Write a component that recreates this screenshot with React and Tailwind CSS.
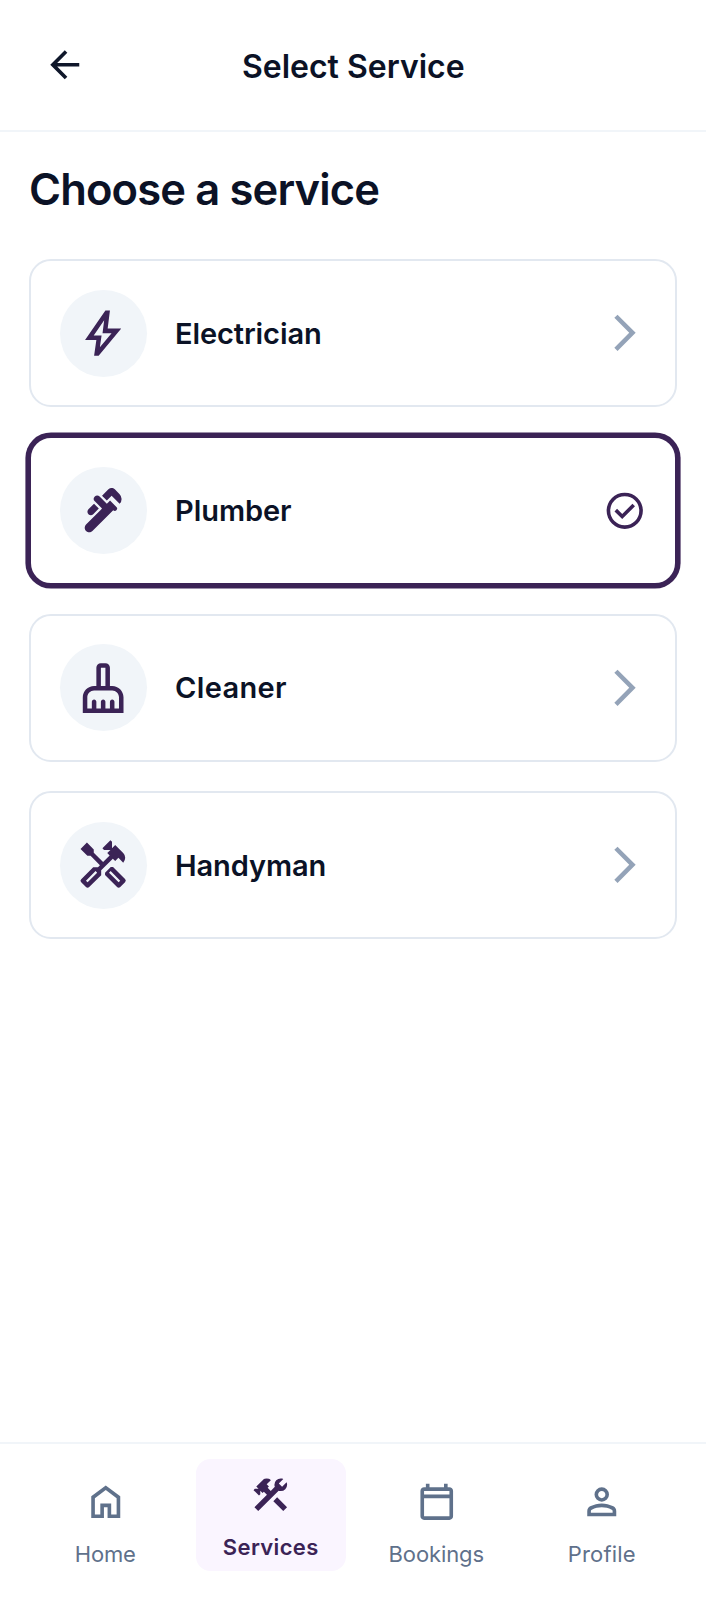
import { MdPlumbing, MdOutlineCleaningServices, MdOutlineHandyman } from "react-icons/md";

const PATHS = {
  back: "m313-440 224 224-57 56-320-320 320-320 57 56-224 224h487v80H313Z",
  bolt: "m422-232 207-248H469l29-227-185 267h139l-30 208ZM320-80l40-280H160l360-520h80l-40 320h240L400-80h-80Z",
  chevron: "m321-80-71-71 329-329-329-329 71-71 400 400L321-80Z",
  check:
    "m424-296 282-282-56-56-226 226-114-114-56 56 170 170Zm56 216q-83 0-156-31.5T197-197q-54-54-85.5-127T80-480q0-83 31.5-156T197-763q54-54 127-85.5T480-880q83 0 156 31.5T763-763q54 54 85.5 127T880-480q0 83-31.5 156T763-197q-54 54-127 85.5T480-80Zm0-80q134 0 227-93t93-227q0-134-93-227t-227-93q-134 0-227 93t-93 227q0 134 93 227t227 93Z",
  tools:
    "M756-120 537-339l84-84 219 219-84 84Zm-552 0-84-84 276-276-68-68-28 28-51-51v82l-28 28-121-121 28-28h82l-50-50 142-142q20-20 43-29t47-9q24 0 47 9t43 29l-92 92 50 50-28 28 68 68 90-90q-4-11-6.5-23t-2.5-24q0-59 40.5-99.5T701-841q15 0 28.5 3t27.5 9l-99 99 72 72 99-99q7 14 9.5 27.5T841-701q0 59-40.5 99.5T701-561q-12 0-24-2t-23-7L204-120Z",
  home: "M240-200h120v-240h240v240h120v-360L480-740 240-560v360Zm-80 80v-480l320-240 320 240v480H520v-240h-80v240H160Z",
  calendar:
    "M200-80q-33 0-56.5-23.5T120-160v-560q0-33 23.5-56.5T200-800h40v-80h80v80h320v-80h80v80h40q33 0 56.5 23.5T840-720v560q0 33-23.5 56.5T760-80H200Zm0-80h560v-400H200v400Zm0-480h560v-80H200v80Z",
  person:
    "M480-480q-66 0-113-47t-47-113q0-66 47-113t113-47q66 0 113 47t47 113q0 66-47 113t-113 47ZM160-160v-112q0-34 17.5-62.5T224-378q62-31 126-46.5T480-440q66 0 130 15.5T736-378q29 15 46.5 43.5T800-272v112H160Zm80-80h480v-32q0-11-5.5-20T700-306q-54-27-109-40.5T480-360q-56 0-111 13.5T260-306q-9 5-14.5 14t-5.5 20v32Zm240-320q33 0 56.5-23.5T560-640q0-33-23.5-56.5T480-720q-33 0-56.5 23.5T400-640q0 33 23.5 56.5T480-560Z",
};

function Symbol({ name, className }) {
  return (
    <svg viewBox="0 -960 960 960" fill="currentColor" className={className} aria-hidden="true">
      <path d={PATHS[name]} />
    </svg>
  );
}

const services = [
  { label: "Electrician", icon: <Symbol name="bolt" className="size-[54.3px]" />, tracking: "tracking-[-0.1px]" },
  { label: "Plumber", icon: <MdPlumbing className="size-[54.3px]" />, tracking: "tracking-[-0.05px]", selected: true },
  { label: "Cleaner", icon: <MdOutlineCleaningServices className="size-[54.3px]" />, tracking: "tracking-[0.35px]" },
  { label: "Handyman", icon: <MdOutlineHandyman className="size-[54.3px]" />, tracking: "tracking-[-0.1px]" },
];

const tabs = [
  { label: "Home", icon: <Symbol name="home" className="size-[43.5px]" />, tracking: "tracking-[-0.2px]" },
  {
    label: "Services",
    icon: <Symbol name="tools" className="size-[43.5px]" />,
    tracking: "tracking-[0.35px]",
    active: true,
  },
  { label: "Bookings", icon: <Symbol name="calendar" className="size-[43.5px]" />, tracking: "tracking-[-0.1px]" },
  { label: "Profile", icon: <Symbol name="person" className="size-[43.5px]" />, tracking: "tracking-[0.2px]" },
];

function ServiceCard({ label, icon, tracking, selected }) {
  return (
    <button
      className={
        "flex h-[148.3px] w-full items-center rounded-[22px] border-2 bg-white px-[29px] text-left " +
        (selected ? "border-[#3b2356] ring-[3.6px] ring-[#3b2356]" : "border-[#e2e8f0]")
      }
    >
      <span className="flex size-[87px] shrink-0 items-center justify-center rounded-full bg-[#f1f5f9] text-[#3b2356]">
        {icon}
      </span>
      <span className={"ml-[28px] flex-1 text-[29px] leading-[43px] font-semibold text-[#0b1226] " + tracking}>
        {label}
      </span>
      {selected ? (
        <Symbol name="check" className="size-[43.5px] text-[#3b2356]" />
      ) : (
        <Symbol name="chevron" className="size-[43.5px] text-[#94a3b8]" />
      )}
    </button>
  );
}

export default function App() {
  return (
    <div className="flex h-[1600px] w-[706px] flex-col bg-white font-['Inter',sans-serif]">
      <header className="flex h-[132px] shrink-0 items-center border-b-2 border-[#f1f5f9] px-[43px]">
        <button className="text-[#0f172a]" aria-label="Back">
          <Symbol name="back" className="size-[43.5px]" />
        </button>
        <h1 className="mr-[43px] flex-1 pt-[4px] text-center text-[32px] leading-[40px] font-semibold text-[#0b1226]">
          Select Service
        </h1>
      </header>

      <main className="flex-1 px-[29px] pt-[30px]">
        <h2 className="text-[43.5px] leading-[55px] font-semibold tracking-[-0.85px] text-[#0b1226]">
          Choose a service
        </h2>
        <div className="mt-[42px] flex flex-col gap-[29px]">
          {services.map((s) => (
            <ServiceCard key={s.label} {...s} />
          ))}
        </div>
      </main>

      <nav className="flex h-[158px] shrink-0 gap-[15px] border-t-2 border-[#f1f5f9] pt-[15px] pr-[29px] pl-[30px]">
        {tabs.map((t) => (
          <button
            key={t.label}
            className={
              "flex h-[112px] flex-1 flex-col items-center rounded-[14.5px] " +
              (t.active
                ? "bg-[#faf5ff] pt-[14px] font-semibold text-[#3b2356]"
                : "pt-[21px] font-normal text-[#5f718b]")
            }
          >
            {t.icon}
            <span className={"mt-[14px] text-[22px] leading-[32px] " + t.tracking}>{t.label}</span>
          </button>
        ))}
      </nav>
    </div>
  );
}
